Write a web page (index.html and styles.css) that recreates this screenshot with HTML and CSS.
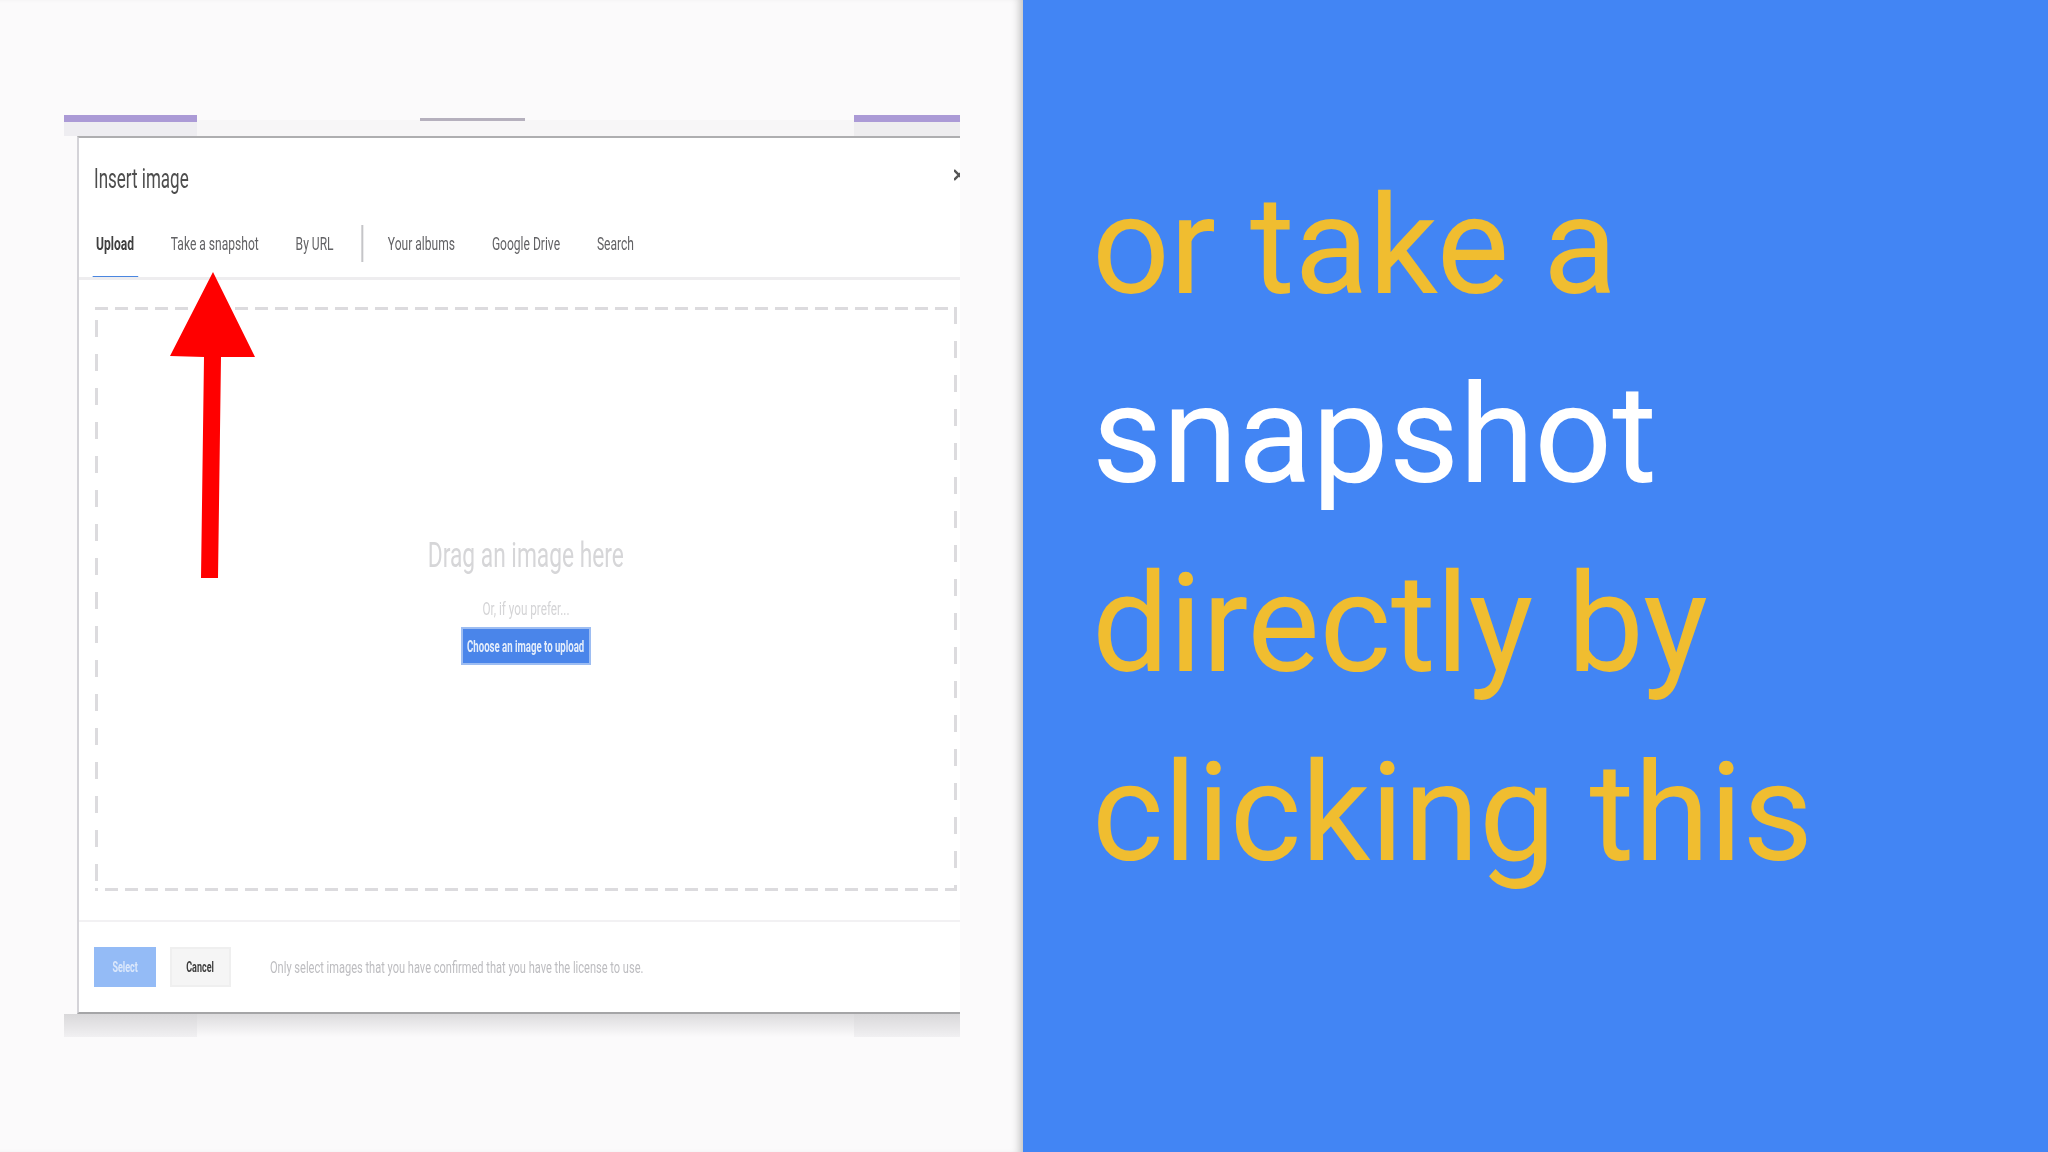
FILE: index.html
```html
<!DOCTYPE html>
<html lang="en">
<head>
  <meta charset="UTF-8" />
  <title>Insert image</title>
  <link rel="stylesheet" href="styles.css">
</head>
<body>
  <div class="slide">
    <div class="left">
      <div class="shot">
        <div class="shot-top">
          <div class="bar bar-a"></div>
          <div class="bar bar-b"></div>
          <div class="bar bar-c"></div>
        </div>
        <div class="dialog">
          <div class="dialog-head">
            <h1>Insert image</h1>
            <svg class="close" width="6" height="12" viewBox="0 0 6 12">
              <path d="M0 1 L10 11 M10 1 L0 11" stroke="#555" stroke-width="2.4" fill="none"/>
            </svg>
          </div>
          <div class="tabs-wrap">
            <div class="tabs">
              <span class="tab tab-on">Upload</span>
              <span class="tab">Take a snapshot</span>
              <span class="tab">By URL</span>
              <span class="tab-sep"></span>
              <span class="tab">Your albums</span>
              <span class="tab">Google Drive</span>
              <span class="tab">Search</span>
            </div>
          </div>
          <div class="drop-wrap">
            <div class="drop">
              <div class="drop-title">Drag an image here</div>
              <div class="drop-or">Or, if you prefer...</div>
              <button class="btn-choose"><span class="squeeze">Choose an image to upload</span></button>
            </div>
          </div>
          <div class="dialog-foot">
            <button class="btn-select"><span class="squeeze">Select</span></button>
            <button class="btn-cancel"><span class="squeeze">Cancel</span></button>
            <span class="note">Only select images that you have confirmed that you have the license to use.</span>
          </div>
        </div>
        <div class="shot-bottom">
          <div class="shade-a"></div>
          <div class="shade-b"></div>
          <div class="shade-c"></div>
        </div>
      </div>
      <svg class="arrow" width="88" height="306" viewBox="0 0 88 306">
        <path d="M45 0 L87 85 L53 85 L50 306 L33 306 L36 85 L2 84 Z" fill="#ff0000"/>
      </svg>
    </div>
    <div class="right">
      <p class="line yellow">or take a</p>
      <p class="line">snapshot</p>
      <p class="line yellow">directly by</p>
      <p class="line yellow">clicking this</p>
    </div>
  </div>
</body>
</html>
```

FILE: styles.css
```css
* {
  box-sizing: border-box;
}
body {
  margin: 0;
  width: 2048px;
  height: 1152px;
  overflow: hidden;
  font-family: Roboto, "Liberation Sans", sans-serif;
}
.slide {
  display: flex;
  height: 100%;
}
.left {
  position: relative;
  width: 1023px;
  padding: 115px 0 0 64px;
  background: #fbfafb;
  box-shadow: inset -9px 0 8px -6px #bdbdbd;
}
/* the pasted screenshot is a blurry, horizontally squeezed video frame */
.shot {
  width: 896px;
  filter: blur(0.6px);
}
.shot-top {
  display: flex;
  height: 21px;
  background: linear-gradient(#fbfafb 5px, #f7f6f7 5px);
}
.bar {
  height: 21px;
}
.bar-a {
  width: 133px;
  background: linear-gradient(#ab9ad6 7px, #eeedf1 7px);
}
.bar-b {
  width: 105px;
  height: 3px;
  margin: 3px 0 0 223px;
  background: #b5b0bd;
}
.bar-c {
  width: 106px;
  margin-left: auto;
  background: linear-gradient(#ab9ad6 7px, #eeedef 7px);
}
.dialog {
  margin-left: 13px;
  height: 878px;
  background: #fff;
  border-top: 2px solid #aeaeb0;
  border-left: 2px solid #d4d3d8;
  border-bottom: 2px solid #a5a5a7;
  display: flex;
  flex-direction: column;
}
.dialog-head {
  display: flex;
  justify-content: space-between;
  align-items: center;
  height: 62px;
  padding: 19px 0 0 15px;
}
.dialog-head h1 {
  margin: 0;
  font-size: 27px;
  font-weight: 400;
  white-space: nowrap;
  color: #4d4d4d;
  transform: scaleX(0.63);
  transform-origin: left;
}
.close {
  margin-top: -8px;
}
.tabs-wrap {
  height: 80px;
  padding: 10px 0 0 17px;
  border-bottom: 3px solid #eeedef;
  overflow: hidden;
}
.tabs {
  display: flex;
  align-items: center;
  width: max-content;
  height: 100%;
  transform: scaleX(0.67);
  transform-origin: left;
}
.tab {
  font-size: 18px;
  line-height: 22px;
  color: #626265;
  margin-right: 55px;
  white-space: nowrap;
}
.tab-on {
  font-weight: 700;
  color: #404040;
  position: relative;
}
.tab-on::after {
  content: "";
  position: absolute;
  left: -5px;
  right: -6px;
  top: 43px;
  height: 3px;
  background: #4a86e0;
}
.tab-sep {
  width: 3px;
  height: 37px;
  background: #c5c5c8;
  margin: 0 37px 0 -14px;
}
.drop-wrap {
  flex: 1;
  padding: 27px 3px 29px 16px;
}
.drop {
  height: 100%;
  display: flex;
  flex-direction: column;
  align-items: center;
  padding-top: 228px;
  background:
    linear-gradient(90deg, #dcdbde 13px, transparent 13px) 0 0 / 20px 3px repeat-x,
    linear-gradient(90deg, #dcdbde 13px, transparent 13px) 10px 100% / 20px 3px repeat-x,
    linear-gradient(#dcdbde 17px, transparent 17px) 0 13px / 3px 34px repeat-y,
    linear-gradient(#dcdbde 17px, transparent 17px) 100% 0 / 3px 34px repeat-y;
}
.drop-title {
  font-size: 35px;
  color: #d6d6d8;
  white-space: nowrap;
  transform: scaleX(0.65);
}
.drop-or {
  margin-top: 22px;
  font-size: 18px;
  line-height: 21px;
  color: #d4d4d6;
  white-space: nowrap;
  transform: scaleX(0.65);
}
.squeeze {
  flex-shrink: 0;
  white-space: nowrap;
  transform: scaleX(0.6);
}
.btn-choose {
  display: flex;
  justify-content: center;
  align-items: center;
  margin-top: 8px;
  width: 130px;
  height: 38px;
  padding: 0;
  border: 2px solid #9dbdf2;
  background: #4a85ea;
  color: #e4edfb;
  font: 700 16px Roboto, sans-serif;
}
.dialog-foot {
  display: flex;
  align-items: center;
  height: 92px;
  padding-left: 15px;
  border-top: 2px solid #f2f1f3;
}
.btn-select,
.btn-cancel {
  display: flex;
  justify-content: center;
  align-items: center;
  height: 40px;
  padding: 0;
  font: 700 15px Roboto, sans-serif;
}
.btn-select {
  width: 62px;
  border: none;
  background: #94bbf6;
  color: #dce8fb;
}
.btn-cancel {
  width: 61px;
  margin-left: 14px;
  border: 2px solid #efefef;
  background: #f5f5f5;
  color: #3d3d3d;
}
.note {
  margin-left: 39px;
  font-size: 17px;
  color: #bdbdc0;
  white-space: nowrap;
  transform: scaleX(0.65);
  transform-origin: left;
}
.shot-bottom {
  display: flex;
  height: 23px;
}
.shade-a,
.shade-c {
  background: linear-gradient(#d9d8da, #f1f0f2);
}
.shade-a {
  width: 133px;
}
.shade-b {
  flex: 1;
  background: linear-gradient(#dcdbdd, #fbfafb);
}
.shade-c {
  width: 106px;
}
/* the red pointer sits over the dialog */
.arrow {
  position: absolute;
  left: 168px;
  top: 272px;
}
.right {
  flex: 1;
  background: #4285f4;
  padding: 152px 0 0 69px;
}
.line {
  margin: 0;
  font-size: 136.5px;
  line-height: 189px;
  color: #fff;
  white-space: nowrap;
}
.yellow {
  color: #f0bd30;
}
```
